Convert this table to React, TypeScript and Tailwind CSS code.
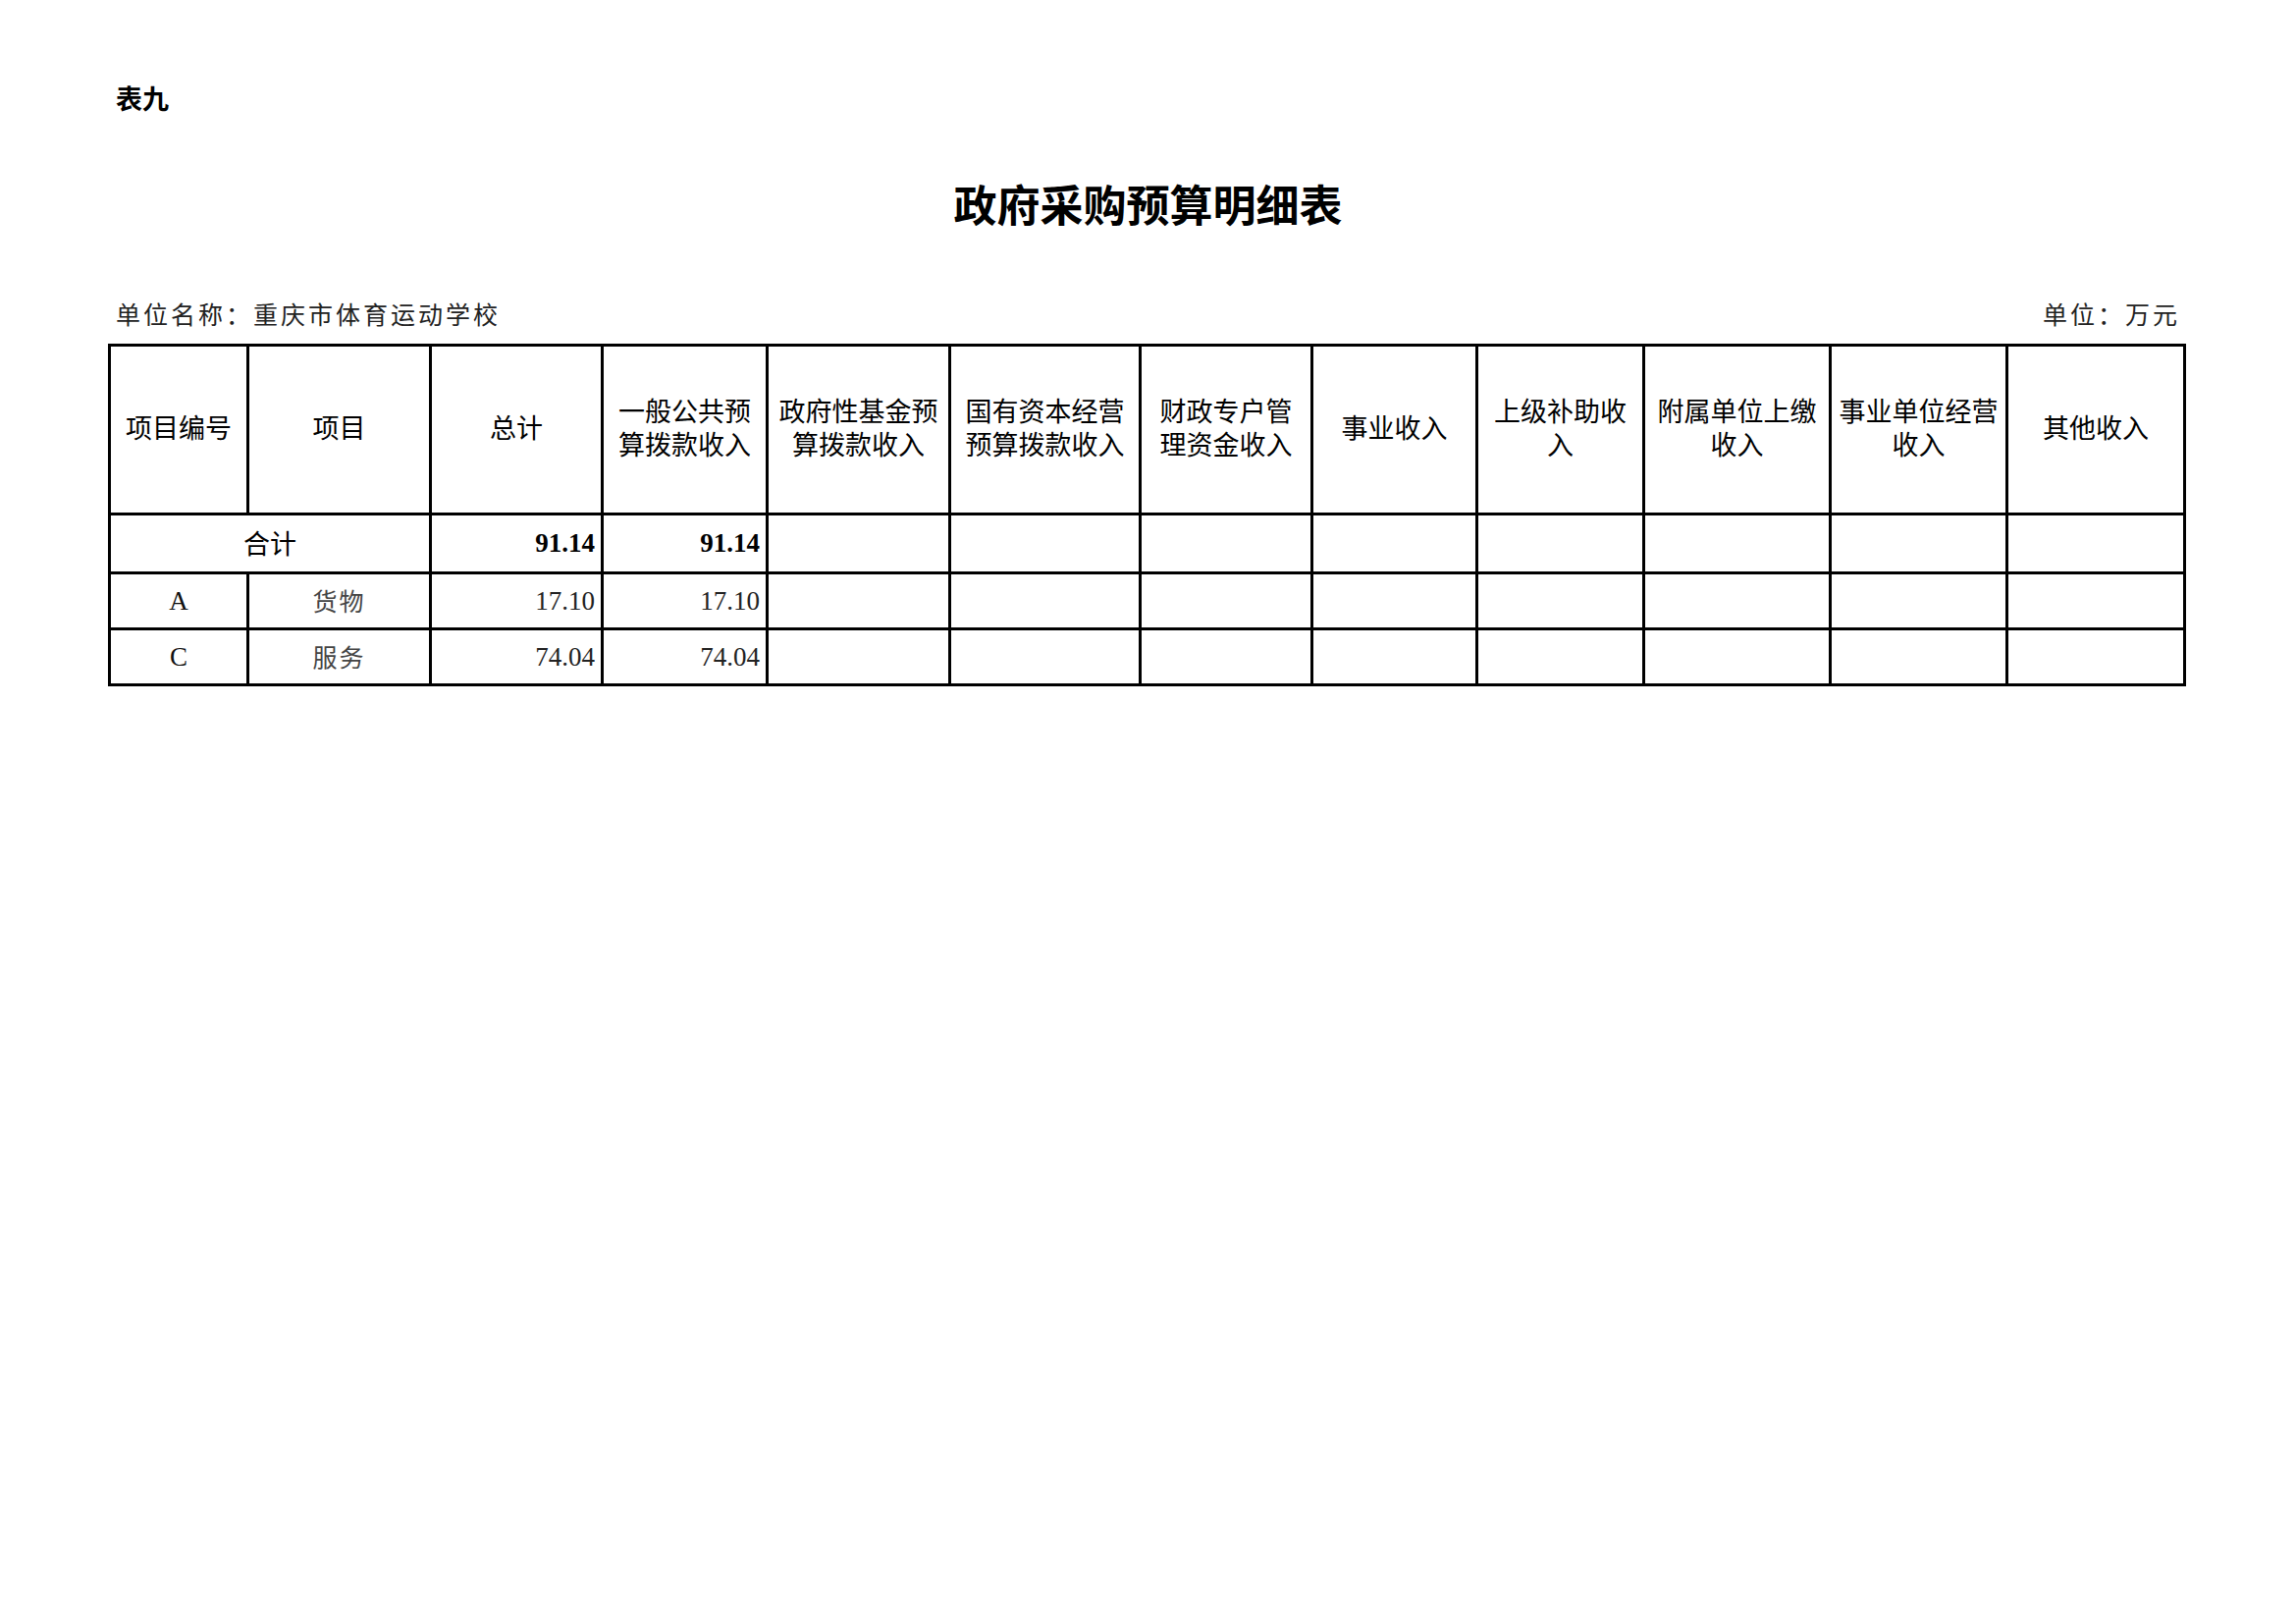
const CJK = "font-['Noto_Sans_CJK_SC','Noto_Sans',sans-serif]";
const SERIF = "font-['Liberation_Serif','Noto_Sans_CJK_SC',serif]";

const COL_WIDTHS = [141, 186, 175, 168, 186, 194, 175, 168, 170, 190, 180, 181];

const HEADERS: string[][] = [
  ["项目编号"],
  ["项目"],
  ["总计"],
  ["一般公共预", "算拨款收入"],
  ["政府性基金预", "算拨款收入"],
  ["国有资本经营", "预算拨款收入"],
  ["财政专户管", "理资金收入"],
  ["事业收入"],
  ["上级补助收", "入"],
  ["附属单位上缴", "收入"],
  ["事业单位经营", "收入"],
  ["其他收入"],
];

interface Row {
  code: string;
  name: string;
  total: string;
  general: string;
}

const ROWS: Row[] = [
  { code: "A", name: "货物", total: "17.10", general: "17.10" },
  { code: "C", name: "服务", total: "74.04", general: "74.04" },
];

const cell = "border-[3px] border-black p-0";

export default function App() {
  return (
    <div className="min-h-[1654px] w-[2339px] bg-white text-black">
      <div className="pl-[110px] pt-[86px] w-[2229px]">
        <div className={`${CJK} text-[27px] font-bold leading-[28px] pl-[8px]`}>表九</div>

        {/* title */}
        <h1 className={`${CJK} mt-[71px] text-center text-[44px] font-bold leading-[44px]`}>
          政府采购预算明细表
        </h1>

        <div className={`${CJK} mt-[76px] flex items-end justify-between px-[8px] text-[25px] leading-[28px] text-[#222]`}>
          <span className="tracking-[3px]">单位名称：重庆市体育运动学校</span>
          <span className="tracking-[3px]">单位：万元</span>
        </div>

        <table className="mt-[17px] w-[2117px] table-fixed border-collapse border-[3px] border-black">
          <colgroup>
            {COL_WIDTHS.map((w, i) => (
              <col key={i} style={{ width: w }} />
            ))}
          </colgroup>
          <tbody>
            <tr className="h-[172px]">
              {HEADERS.map((lines, i) => (
                <td key={i} className={`${cell} ${CJK} text-center align-middle text-[27px] leading-[34px]`}>
                  <div className="-mt-[6px]">
                    {lines.map((l, j) => (
                      <div key={j} className="whitespace-nowrap">
                        {l}
                      </div>
                    ))}
                  </div>
                </td>
              ))}
            </tr>
            <tr className="h-[60px]">
              <td colSpan={2} className={`${cell} ${CJK} text-center text-[27px] leading-[30px]`}>
                <span className="relative -top-[1px]">合计</span>
              </td>
              <td className={`${cell} ${SERIF} pr-[6px] text-right text-[27px] font-bold`}>91.14</td>
              <td className={`${cell} ${SERIF} pr-[6px] text-right text-[27px] font-bold`}>91.14</td>
              {Array.from({ length: 8 }).map((_, i) => (
                <td key={i} className={cell} />
              ))}
            </tr>
            {ROWS.map((r) => (
              <tr key={r.code} className="h-[57px]">
                <td className={`${cell} ${SERIF} text-center text-[27px] text-[#111]`}>{r.code}</td>
                <td className={`${cell} ${CJK} text-center text-[25px] tracking-[2px] text-[#444]`}>{r.name}</td>
                <td className={`${cell} ${SERIF} pr-[6px] text-right text-[27px] text-[#222]`}>{r.total}</td>
                <td className={`${cell} ${SERIF} pr-[6px] text-right text-[27px] text-[#222]`}>{r.general}</td>
                {Array.from({ length: 8 }).map((_, i) => (
                  <td key={i} className={cell} />
                ))}
              </tr>
            ))}
          </tbody>
        </table>
      </div>
    </div>
  );
}
